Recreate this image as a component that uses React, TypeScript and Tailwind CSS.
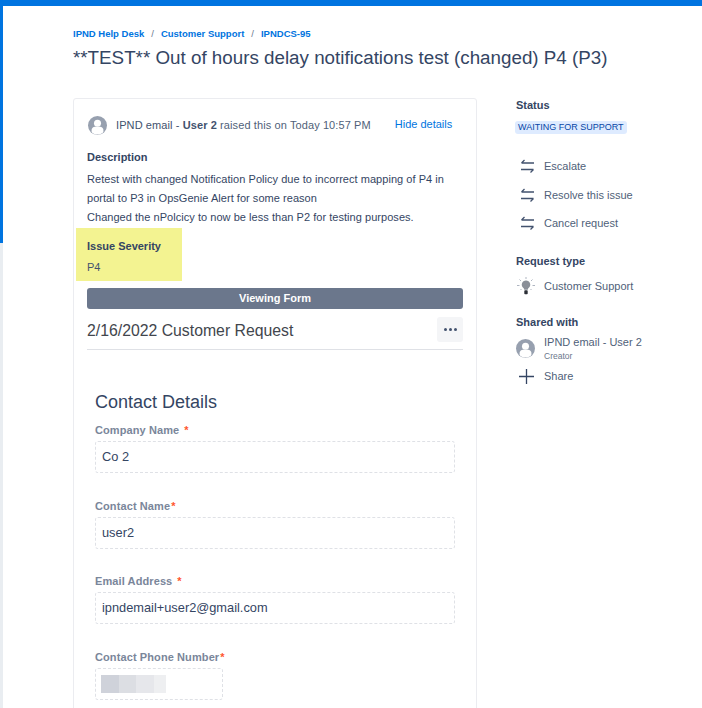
import React from 'react';

const font = { fontFamily: '"Liberation Sans", Arial, sans-serif' };

function SwapIcon() {
  return (
    <svg width="15" height="14" viewBox="0 0 15 14" fill="none" stroke="#42526e" strokeWidth="1.3" className="shrink-0">
      <path d="M14 4H1.500M4.500 1L1.500 4" />
      <path d="M1 10.500H13.500M10.500 13.500L13.500 10.500" />
    </svg>
  );
}

function Avatar({ size }: { size: number }) {
  return (
    <svg width={size} height={size} viewBox="0 0 20 20" className="shrink-0">
      <circle cx="10" cy="10" r="10" fill="#97a0af" />
      <circle cx="10" cy="7.600" r="3.700" fill="#fff" />
      <path d="M3.800 17v-2.400c0-2 1.600-3.400 3.500-3.400h5.400c1.900 0 3.500 1.400 3.500 3.400V17c-1.700 1.500-3.900 2.400-6.200 2.400S5.500 18.500 3.800 17z" fill="#fff" />
    </svg>
  );
}

function Bulb() {
  return (
    <svg width="20" height="20" viewBox="0 0 20 20" fill="none" className="shrink-0 -mt-[2px]">
      <path d="M10 1v2M3.500 3.500l1.500 1.500M16.500 3.500L15 5M1 9.500h2.500M16.500 9.500H19M4.500 14l1-1M15.500 14l-1-1" stroke="#a5adba" strokeWidth="0.9" />
      <path d="M10 4.500a4.200 4.200 0 0 0-2.600 7.500c.6.500.8 1 .8 1.700h3.600c0-.7.2-1.200.8-1.700A4.200 4.200 0 0 0 10 4.500z" fill="#8a8f98" />
      <rect x="8.300" y="14.200" width="3.400" height="4" rx="0.800" fill="#2b2f36" />
    </svg>
  );
}

function Field({ label, gap, value, className, wrapClass }: { label: string; gap: boolean; value?: string; className?: string; wrapClass?: string }) {
  return (
    <div className={wrapClass}>
      <div className="text-[11px] leading-[14px] font-bold text-[#7a869a] tracking-[0.1px]">
        {label}
        <span className={`text-[#ff5630] ${gap ? 'ml-[5px]' : 'ml-[1px]'}`}>*</span>
      </div>
      <div className={`mt-[4px] h-[32px] border border-dashed border-[#dfe1e6] rounded-[3px] px-[6px] flex items-center text-[12.800px] text-[#344563] ${className ?? ''}`}>
        {value ?? (
          <div className="flex h-[18px] -ml-[1px]">
            <div className="w-[18px] bg-[#cfd2da]" />
            <div className="w-[17px] bg-[#dcdee3]" />
            <div className="w-[18px] bg-[#e6e7eb]" />
            <div className="w-[12px] bg-[#eeeff1]" />
          </div>
        )}
      </div>
    </div>
  );
}

function Action({ label }: { label: string }) {
  return (
    <div className="flex items-center h-[28.500px] pl-[4px] gap-[9px] text-[11px] text-[#505f79]">
      <SwapIcon />
      <span>{label}</span>
    </div>
  );
}

export default function App() {
  return (
    <div className="h-[708px] w-[702px] overflow-hidden bg-white flex flex-col" style={font}>
      <div className="h-[6px] bg-[#0074e0] shrink-0" />
      <div className="flex flex-1 min-h-0">
        <div className="w-[3px] flex flex-col shrink-0">
          <div className="h-[237px] bg-[#0074e0]" />
          <div className="flex-1 bg-[#e9edf1]" />
        </div>
        <div className="pl-[70px] pt-[22px] flex-1 min-w-0">
          <div className="flex items-center text-[9.500px] leading-[12px] font-bold text-[#0074e0] gap-[7px]">
            <span>IPND Help Desk</span>
            <span className="font-normal text-[#6b778c]">/</span>
            <span>Customer Support</span>
            <span className="font-normal text-[#6b778c]">/</span>
            <span>IPNDCS-95</span>
          </div>
          <h1 className="mt-[4px] text-[18.800px] leading-[28px] text-[#344563] whitespace-nowrap">
            **TEST** Out of hours delay notifications test (changed) P4 (P3)
          </h1>

          <div className="mt-[26px] flex items-start">
            <div className="w-[404px] border border-[#ebecf0] rounded-[3px] px-[13px] pt-[16px] h-[700px] shrink-0">
              <div className="flex items-center h-[20px] pl-[1px] text-[11px] text-[#505f79]">
                <Avatar size={19} />
                <span className="ml-[9px] tracking-[0.1px]">
                  <span className="text-[#42526e]">IPND email - </span>
                  <b className="text-[#42526e]">User 2</b> raised this on Today 10:57 PM
                </span>
                <span className="ml-[24px] text-[#0074e0] -mt-[1px]">Hide details</span>
              </div>
              <div className="mt-[15px] text-[11px] leading-[14px] font-bold text-[#344563]">Description</div>
              <div className="mt-[6px] text-[11px] leading-[19px] text-[#344563] tracking-[0.04px]">
                Retest with changed Notification Policy due to incorrect mapping of P4 in
                <br />
                portal to P3 in OpsGenie Alert for some reason
                <br />
                Changed the nPolcicy to now be less than P2 for testing purposes.
              </div>
              <div className="-ml-[11px] mt-[1px] w-[106px] h-[53px] bg-[#f3f391] pl-[11px] pt-[11px]">
                <div className="text-[11px] leading-[14px] font-bold text-[#344563]">Issue Severity</div>
                <div className="mt-[7px] text-[11px] leading-[14px] text-[#42526e]">P4</div>
              </div>
              <div className="mt-[7px] h-[21px] rounded-[3px] bg-[#6b778c] text-white text-[11px] font-bold flex items-center justify-center">
                Viewing Form
              </div>
              <div className="mt-[5px] flex items-center justify-between h-[33px] border-b border-[#dfe1e6] pb-[2px] box-content">
                <span className="text-[15.800px] text-[#42464d]">2/16/2022 Customer Request</span>
                <div className="w-[26px] h-[25px] -mt-[3px] bg-[#f4f5f7] rounded-[3px] flex items-center justify-center gap-[2px]">
                  <span className="w-[3px] h-[3px] rounded-full bg-[#42526e]" />
                  <span className="w-[3px] h-[3px] rounded-full bg-[#42526e]" />
                  <span className="w-[3px] h-[3px] rounded-full bg-[#42526e]" />
                </div>
              </div>
              <div className="px-[8px]">
                <h2 className="mt-[40px] text-[18px] leading-[24px] text-[#344563]">Contact Details</h2>
                <Field wrapClass="mt-[9px]" label="Company Name" gap value="Co 2" />
                <Field wrapClass="mt-[25.500px]" label="Contact Name" gap={false} value="user2" />
                <Field wrapClass="mt-[25.500px]" label="Email Address" gap value="ipndemail+user2@gmail.com" />
                <Field wrapClass="mt-[25.500px]" label="Contact Phone Number" gap={false} className="w-[128px]" />
              </div>
            </div>

            <div className="ml-[39px] flex-1 min-w-0">
              <div className="text-[11px] leading-[14px] font-bold text-[#344563]">Status</div>
              <span className="mt-[9px] -ml-[1px] inline-block bg-[#deebff] text-[#0747a6] text-[9px] leading-[13px] px-[3px] rounded-[3px]">WAITING FOR SUPPORT</span>
              <div className="mt-[15px]">
                <Action label="Escalate" />
                <Action label="Resolve this issue" />
                <Action label="Cancel request" />
              </div>
              <div className="mt-[16px] text-[11px] leading-[14px] font-bold text-[#344563]">Request type</div>
              <div className="mt-[9px] flex items-center gap-[8px] h-[20px] text-[11px] text-[#505f79]">
                <Bulb />
                <span>Customer Support</span>
              </div>
              <div className="mt-[18px] text-[11px] leading-[14px] font-bold text-[#344563]">Shared with</div>
              <div className="mt-[6px] flex items-center gap-[9px]">
                <Avatar size={19} />
                <div>
                  <div className="text-[11px] leading-[14px] text-[#505f79]">IPND email - User 2</div>
                  <div className="mt-[2px] text-[8.500px] leading-[11px] text-[#6b778c]">Creator</div>
                </div>
              </div>
              <div className="mt-[5px] flex items-center gap-[9px] h-[20px] text-[11px] text-[#505f79]">
                <svg width="17" height="17" viewBox="0 0 17 17" stroke="#344563" strokeWidth="1.300" className="ml-[2px] shrink-0">
                  <path d="M8.500 1v15M1 8.500h15" />
                </svg>
                <span>Share</span>
              </div>
            </div>
          </div>
        </div>
      </div>
    </div>
  );
}
